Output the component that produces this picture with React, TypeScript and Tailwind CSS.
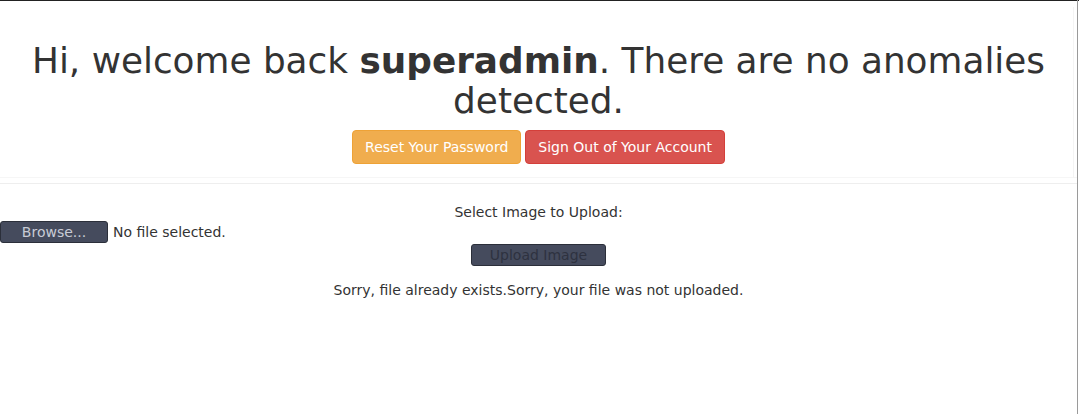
export default function App() {
  return (
    <div className="relative w-[1079px] h-[414px] bg-white text-[#333] overflow-hidden" style={{ fontFamily: '"DejaVu Sans", sans-serif' }}>
      <div className="h-[1px] bg-[#222]" />
      <div className="w-[1077px]">
        <div className="mt-[6px] border-b border-[#f6f6f6] text-center pt-[34px] pb-[13px]">
          <h1 className="text-[35.85px] leading-[39.6px] font-normal px-[15px]">
            Hi, welcome back <b className="font-bold">superadmin</b>. There are no anomalies detected.
          </h1>
          <div className="mt-[10px] flex justify-center gap-[4px] text-[14px] leading-[20px]">
            <button className="bg-[#f0ad4e] border border-[#eea236] text-white rounded-[4px] px-[12px] py-[6px]">Reset Your Password</button>
            <button className="bg-[#d9534f] border border-[#d43f3a] text-white rounded-[4px] px-[12px] py-[6px]">Sign Out of Your Account</button>
          </div>
        </div>
        <div className="h-[1px] bg-[#eeeeee] mt-[5px]" />
        <div className="text-[14px] leading-[20px]">
          <div className="text-center mt-[18px]">Select Image to Upload:</div>
          <div className="flex items-center mt-[-1px]">
            <span className="w-[108px] h-[22px] bg-[#454b5d] border border-[#2b2f3a] rounded-[3px] text-[#c8cbd6] text-center text-[14px] leading-[20px]">Browse...</span>
            <span className="ml-[5px]">No file selected.</span>
          </div>
          <div className="flex justify-center mt-[1px]">
            <span className="w-[135px] h-[22px] bg-[#454b5d] border border-[#2b2f3a] rounded-[3px] text-[#2e3240] text-center text-[14px] leading-[20px]">Upload Image</span>
          </div>
          <div className="text-center mt-[14px]">Sorry, file already exists.Sorry, your file was not uploaded.</div>
        </div>
      </div>
      <div className="absolute top-0 left-[1077px] w-[1px] h-[414px] bg-[#9a9a9a]" />
      <div className="absolute top-[7px] left-[1073px] w-[1px] h-[171px] bg-[#f4f4f4]" />
    </div>
  );
}
